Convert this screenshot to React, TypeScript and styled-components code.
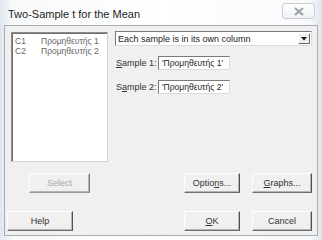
import styled, { createGlobalStyle, css } from "styled-components";

const Global = createGlobalStyle`
  body {
    margin: 0;
    background: #ffffff;
    font-family: "Liberation Sans", Arial, sans-serif;
  }
`;

const Frame = styled.div`
  width: 322px;
  height: 240px;
  box-sizing: border-box;
  padding: 0 4px 4px 4px;
  display: flex;
  flex-direction: column;
  background: linear-gradient(90deg, #dfe6ee 0px, #f7f9fb 12px, #ffffff 50%, #f7f9fb calc(100% - 12px), #dfe6ee 100%);
`;

const TitleBar = styled.div`
  height: 25px;
  display: flex;
  align-items: flex-start;
  justify-content: space-between;
`;

const Title = styled.div`
  padding: 8px 0 0 4px;
  font-size: 11px;
  color: #1e1e1e;
`;

const CloseBtn = styled.div`
  margin: 3px 3px 0 0;
  width: 33px;
  height: 16px;
  box-sizing: border-box;
  border: 1px solid #c9ccd2;
  border-radius: 3px;
  background: linear-gradient(#ffffff, #eef0f3);
  display: flex;
  align-items: center;
  justify-content: center;
`;

const Client = styled.div`
  flex: 1;
  background: #f0f0f0;
  border: 1px solid #a8adb4;
  padding: 6px 5px 0 6px;
  display: flex;
  flex-direction: column;
  font-size: 9px;
  color: #222;
  white-space: nowrap;
`;

const Main = styled.div`
  display: flex;
  gap: 7px;
  height: 130px;
`;

const ListBox = styled.div`
  width: 97px;
  box-sizing: border-box;
  background: #fff;
  border: 1px solid #8c8c8c;
  border-right-color: #d4d4d4;
  border-bottom-color: #d4d4d4;
  box-shadow: inset 1px 1px 0 #6f6f6f;
  padding: 3px 3px;
  overflow: hidden;
`;

const ListRow = styled.div`
  display: flex;
  font-size: 8.5px;
  line-height: 10px;
  color: #666;
`;

const ColId = styled.span`
  width: 26px;
`;

const Right = styled.div`
  flex: 1;
  display: flex;
  flex-direction: column;
`;

const Combo = styled.div`
  height: 15px;
  box-sizing: border-box;
  background: #fff;
  border: 1px solid #7a7a7a;
  border-right-color: #dcdcdc;
  border-bottom-color: #dcdcdc;
  display: flex;
  align-items: center;
  justify-content: space-between;
  padding-left: 2px;
  font-size: 9px;
  margin-top: -1px;
`;

const ComboArrow = styled.div`
  width: 12px;
  height: 11px;
  margin-right: 1px;
  background: #f0f0f0;
  border: 1px solid #fff;
  border-right-color: #6a6a6a;
  border-bottom-color: #6a6a6a;
  box-sizing: border-box;
  display: flex;
  align-items: center;
  justify-content: center;
`;

const FieldRow = styled.div`
  display: flex;
  align-items: center;
  margin-top: 10px;
  &:first-of-type {
    margin-top: 9px;
  }
`;

const FieldLabel = styled.span`
  width: 42px;
  padding-left: 1px;
  font-size: 9px;
  color: #333;
`;

const Field = styled.div`
  width: 72px;
  height: 14px;
  box-sizing: border-box;
  background: #fff;
  border: 1px solid #7a7a7a;
  border-right-color: #dcdcdc;
  border-bottom-color: #dcdcdc;
  font-size: 8.5px;
  line-height: 12px;
  padding-left: 3px;
  overflow: hidden;
`;

const ButtonRow = styled.div<{ $top: number }>`
  display: grid;
  grid-template-columns: 1fr 56px 60px;
  column-gap: 12px;
  margin-top: ${(p) => p.$top}px;
  height: 20px;
`;

const Button = styled.div<{ $disabled?: boolean; $left?: number; $width?: number }>`
  box-sizing: border-box;
  height: 20px;
  background: #f0f0f0;
  border: 1px solid #fdfdfd;
  border-right: 1px solid #505050;
  border-bottom: 1px solid #707070;
  box-shadow: inset -1px -1px 0 #b4b4b4;
  display: flex;
  align-items: center;
  justify-content: center;
  font-size: 9px;
  color: #333;
  ${(p) =>
    p.$left !== undefined &&
    css`
      margin-left: ${p.$left}px;
      width: ${p.$width}px;
    `}
  ${(p) =>
    p.$disabled &&
    css`
      color: #a8a8a8;
      border-right-color: #7a7a7a;
      border-bottom-color: #9a9a9a;
    `}
`;

const U = styled.span`
  text-decoration: underline;
`;

export default function App() {
  return (
    <>
      <Global />
      <Frame>
        <TitleBar>
          <Title>Two-Sample t for the Mean</Title>
          <CloseBtn>
            <svg width="10" height="9" viewBox="0 0 10 9">
              <path d="M1 1 L9 8 M9 1 L1 8" stroke="#9a9ea6" strokeWidth="2" fill="none" />
            </svg>
          </CloseBtn>
        </TitleBar>
        <Client>
          <Main>
            <ListBox>
              <ListRow>
                <ColId>C1</ColId>
                <span>Προμηθευτής 1</span>
              </ListRow>
              <ListRow>
                <ColId>C2</ColId>
                <span>Προμηθευτής 2</span>
              </ListRow>
            </ListBox>
            <Right>
              <Combo>
                <span>Each sample is in its own column</span>
                <ComboArrow>
                  <svg width="6" height="4" viewBox="0 0 6 4">
                    <path d="M0 0 H6 L3 3.5 Z" fill="#111" />
                  </svg>
                </ComboArrow>
              </Combo>
              <FieldRow>
                <FieldLabel>
                  <U>S</U>ample 1:
                </FieldLabel>
                <Field>'Προμηθευτής 1'</Field>
              </FieldRow>
              <FieldRow>
                <FieldLabel>
                  S<U>a</U>mple 2:
                </FieldLabel>
                <Field>'Προμηθευτής 2'</Field>
              </FieldRow>
            </Right>
          </Main>
          <ButtonRow $top={11}>
            <Button $disabled $left={18} $width={61}>
              Select
            </Button>
            <Button>
              Optio<U>n</U>s...
            </Button>
            <Button>
              <U>G</U>raphs...
            </Button>
          </ButtonRow>
          <ButtonRow $top={18}>
            <Button $left={-4} $width={66}>
              Help
            </Button>
            <Button>
              <U>O</U>K
            </Button>
            <Button>Cancel</Button>
          </ButtonRow>
        </Client>
      </Frame>
    </>
  );
}
